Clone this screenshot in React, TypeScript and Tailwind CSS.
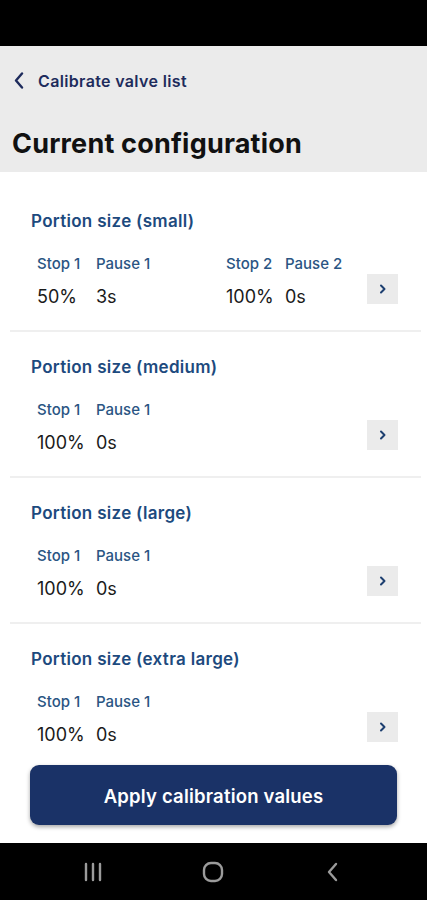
const font = { fontFamily: "Inter, 'Noto Sans', sans-serif" };

type Step = { stop: string; pause: string; n: number };

const sections: { title: string; steps: Step[] }[] = [
  {
    title: "Portion size (small)",
    steps: [
      { n: 1, stop: "50%", pause: "3s" },
      { n: 2, stop: "100%", pause: "0s" },
    ],
  },
  { title: "Portion size (medium)", steps: [{ n: 1, stop: "100%", pause: "0s" }] },
  { title: "Portion size (large)", steps: [{ n: 1, stop: "100%", pause: "0s" }] },
  { title: "Portion size (extra large)", steps: [{ n: 1, stop: "100%", pause: "0s" }] },
];

const Section = ({ title, steps }: { title: string; steps: Step[] }) => (
  <div className="ml-[10px] mr-[6px] h-[146px] border-b-2 border-[#efefef] pl-[21px] pr-[23px] pt-[24px]">
    <h2 className="text-[17px] leading-[22px] font-semibold text-[#1d4a7e] tracking-[0.3px]">{title}</h2>
    <div className="flex items-end justify-between">
      <div className="flex pl-[6px]">
        {steps.map((s, i) => (
          <div key={s.n} className={i < steps.length - 1 ? "w-[189px]" : ""}>
            <div className="mt-[22px] flex text-[15px] leading-[20px] font-medium text-[#2a5583]">
              <span className="w-[59px]">Stop {s.n}</span>
              <span>Pause {s.n}</span>
            </div>
            <div className="mt-[12px] flex text-[18px] leading-[22px] text-[#1a1a1a]">
              <span className="w-[59px]">{s.stop}</span>
              <span>{s.pause}</span>
            </div>
          </div>
        ))}
      </div>
      <button className="mb-[4px] flex h-[30px] w-[31px] items-center justify-center bg-[#ebebeb]">
        <svg width="8" height="10" viewBox="0 0 8 10" fill="none">
          <path d="M2 1.5 L5.5 5 L2 8.5" stroke="#1d3f70" strokeWidth="2" strokeLinecap="round" strokeLinejoin="round" />
        </svg>
      </button>
    </div>
  </div>
);

export default function App() {
  return (
    <div className="flex h-[900px] w-[427px] flex-col overflow-hidden bg-white" style={font}>
      <div className="h-[46px] bg-black" />

      <div className="h-[126px] bg-[#ebebeb] px-[12px]">
        <div className="flex h-[68px] items-center gap-[14px] pl-[2px] pt-[1px]">
          <svg width="10" height="17" viewBox="0 0 10 17" fill="none">
            <path d="M8 1.5 L2 8.5 L8 15.5" stroke="#1e2b5c" strokeWidth="2.4" strokeLinecap="round" strokeLinejoin="round" />
          </svg>
          <span className="text-[16px] font-semibold text-[#1e2b5c] tracking-[0.35px]">Calibrate valve list</span>
        </div>
        <h1 className="pt-[13px] text-[27px] leading-[34px] font-bold text-[#111] tracking-[0.2px]">Current configuration</h1>
      </div>

      <div className="flex-1 overflow-hidden pt-[14px]">
        {sections.map((s) => (
          <Section key={s.title} title={s.title} steps={s.steps} />
        ))}
      </div>

      <div className="bg-white px-[30px] pb-[18px] pt-[10px]">
        <button className="flex h-[60px] w-full items-center justify-center rounded-[9px] bg-[#1a3267] pt-[3px] text-[18.5px] font-semibold text-white tracking-[0.2px] shadow-[0_2px_4px_rgba(0,0,0,0.35)]">
          Apply calibration values
        </button>
      </div>

      <div className="flex h-[57px] items-center bg-black pl-[33px]">
        <div className="flex w-[120px] justify-center">
          <svg width="22" height="20" viewBox="0 0 22 20" fill="none">
            <path d="M4 2v16M11 2v16M18 2v16" stroke="#9b9b9b" strokeWidth="2.4" strokeLinecap="round" />
          </svg>
        </div>
        <div className="flex w-[120px] justify-center">
          <svg width="22" height="22" viewBox="0 0 22 22" fill="none">
            <rect x="2" y="2" width="18" height="18" rx="7" stroke="#9b9b9b" strokeWidth="2.4" />
          </svg>
        </div>
        <div className="flex w-[120px] justify-center">
          <svg width="14" height="22" viewBox="0 0 14 22" fill="none">
            <path d="M10 3 L3 11 L10 19" stroke="#9b9b9b" strokeWidth="2.4" strokeLinecap="round" strokeLinejoin="round" />
          </svg>
        </div>
      </div>
    </div>
  );
}
